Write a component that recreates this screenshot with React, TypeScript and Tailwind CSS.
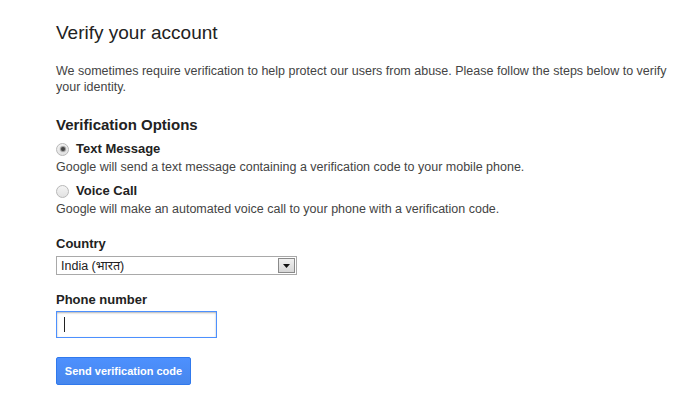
import { useState } from 'react'

function Radio({ checked }: { checked: boolean }) {
  return (
    <span className="relative inline-block w-[13px] h-[13px] rounded-full border border-[#b8b8b8] bg-[linear-gradient(#f4f4f4,#e2e2e2)] shrink-0">
      {checked && (
        <span className="absolute left-[3.5px] top-[3.5px] w-[4px] h-[4px] rounded-full bg-[#444] shadow-[0_0_1px_1px_rgba(60,60,60,0.5)]" />
      )}
    </span>
  )
}

export default function App() {
  const [method, setMethod] = useState<'sms' | 'voice'>('sms')

  return (
    <div className="min-h-[401px] bg-white font-['Liberation_Sans',Arial,sans-serif] text-[#444] pl-[56px] pt-[21px] pr-[16px]">
      <h1 className="text-[19px] leading-[24px] text-[#222]">Verify your account</h1>

      <p className="mt-[18px] w-[620px] text-[12.5px] leading-[16px]">
        We sometimes require verification to help protect our users from abuse. Please follow the steps below to verify your identity.
      </p>

      <h2 className="mt-[20px] text-[15px] leading-[19px] font-bold text-[#222]">Verification Options</h2>

      <div className="mt-[6px]">
        <label className="flex items-center gap-[7px] cursor-pointer" onClick={() => setMethod('sms')}>
          <Radio checked={method === 'sms'} />
          <span className="text-[13px] leading-[18px] font-bold text-[#222]">Text Message</span>
        </label>
        <p className="mt-[1px] text-[12.5px] leading-[16px]">
          Google will send a text message containing a verification code to your mobile phone.
        </p>
      </div>

      <div className="mt-[7px]">
        <label className="flex items-center gap-[7px] cursor-pointer" onClick={() => setMethod('voice')}>
          <Radio checked={method === 'voice'} />
          <span className="text-[13px] leading-[18px] font-bold text-[#222]">Voice Call</span>
        </label>
        <p className="mt-[1px] text-[12.5px] leading-[16px]">
          Google will make an automated voice call to your phone with a verification code.
        </p>
      </div>

      <div className="mt-[18px] text-[13px] leading-[17px] font-bold text-[#222]">Country</div>
      <div className="mt-[4px] flex items-center w-[241px] h-[19px] border border-[#a9a9a9] bg-white">
        <span className="flex-1 pl-[4px] text-[12.5px] leading-[16px] text-[#222] font-['Liberation_Sans','Noto_Sans',Arial,sans-serif]">
          India (भारत)
        </span>
        <span className="flex items-center justify-center w-[17px] h-[15px] mr-[1px] border border-[#8a8a8a] bg-[linear-gradient(#f0f0f0,#d6d6d6)]">
          <svg width="7" height="4" viewBox="0 0 7 4">
            <path d="M0 0H7L3.5 4Z" fill="#111" />
          </svg>
        </span>
      </div>

      <div className="mt-[16px] text-[13px] leading-[17px] font-bold text-[#222]">Phone number</div>
      <div className="mt-[3px] relative w-[161px] h-[27px] border border-[#4d90fe] bg-white shadow-[inset_0_1px_2px_rgba(0,0,0,0.3)]">
        <span className="absolute left-[7px] top-[5px] w-[1px] h-[15px] bg-[#222]" />
      </div>

      <button className="mt-[19px] w-[135px] h-[28px] rounded-[2px] border border-[#3079ed] bg-[linear-gradient(#4d90fe,#4787ed)] text-white text-[11px] font-bold">
        Send verification code
      </button>
    </div>
  )
}
